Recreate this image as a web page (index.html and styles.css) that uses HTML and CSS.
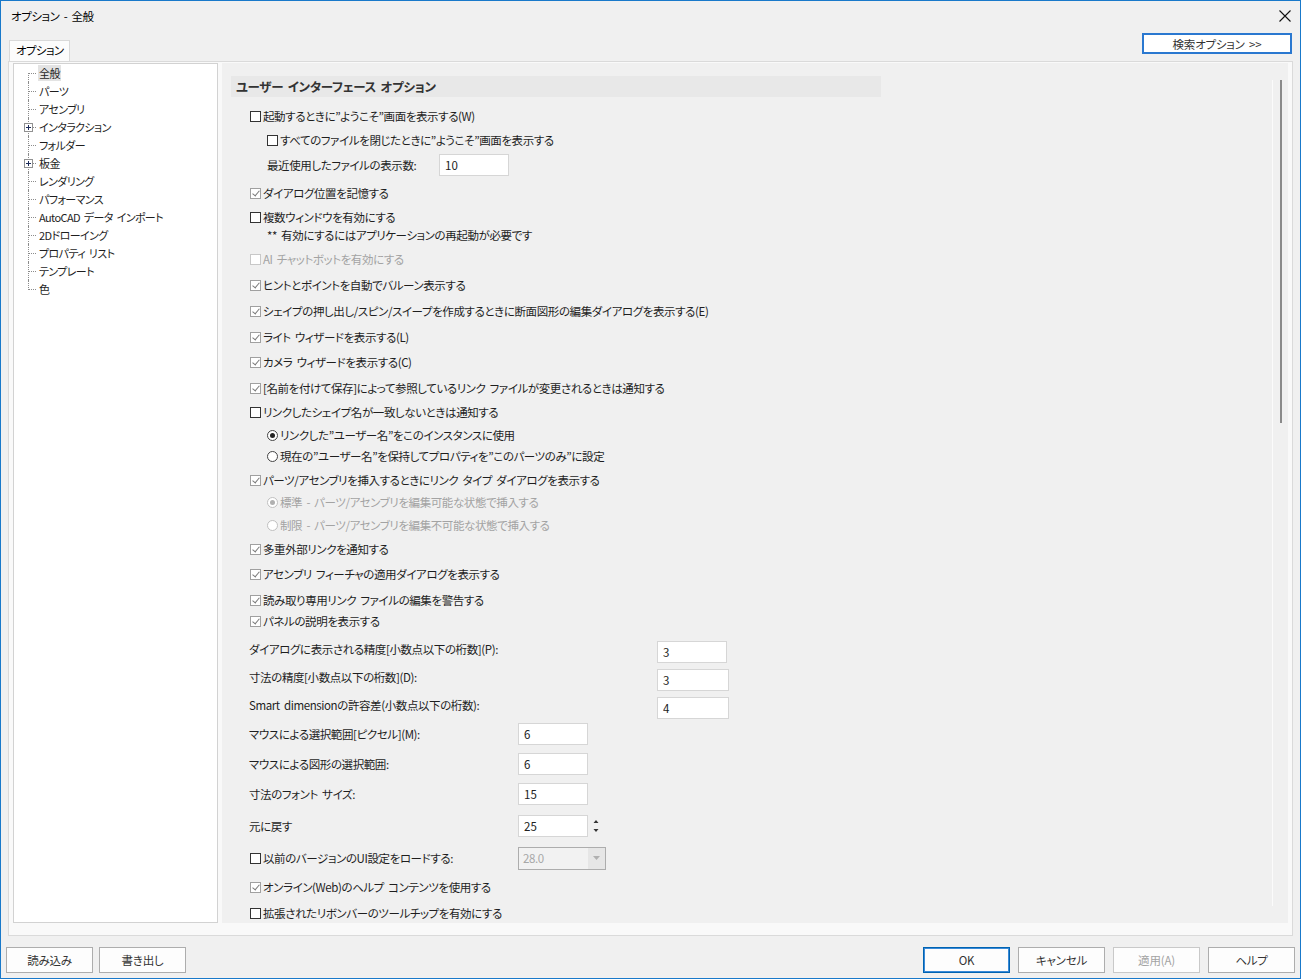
FILE: index.html
```html
<!DOCTYPE html>
<html>
<head>
    <title>オプション - 全般</title>
    <meta charset="utf-8">
    <link rel="stylesheet" href="styles.css">
</head>
<body>
<div class="window">
    <div class="titlebar">
        <span class="title">オプション - 全般</span>
        <svg class="close" width="12" height="12" viewBox="0 0 12 12"><path d="M0.5 0.5 L11.5 11.5 M11.5 0.5 L0.5 11.5" stroke="#111" stroke-width="1.1" fill="none"/></svg>
    </div>

    <div class="tabbar">
        <div class="tab">オプション</div>
        <button class="search-btn">検索オプション &gt;&gt;</button>
    </div>

    <div class="panel">
        <ul class="tree">
            <li><span class="node selected">全般</span></li>
            <li><span class="node">パーツ</span></li>
            <li><span class="node">アセンブリ</span></li>
            <li><span class="expander"></span><span class="node">インタラクション</span></li>
            <li><span class="node">フォルダー</span></li>
            <li><span class="expander"></span><span class="node">板金</span></li>
            <li><span class="node">レンダリング</span></li>
            <li><span class="node">パフォーマンス</span></li>
            <li><span class="node">AutoCAD データ インポート</span></li>
            <li><span class="node">2Dドローイング</span></li>
            <li><span class="node">プロパティ リスト</span></li>
            <li><span class="node">テンプレート</span></li>
            <li><span class="node">色</span></li>
        </ul>

        <div class="content">
            <div class="section-title">ユーザー インターフェース オプション</div>
            <div class="opts">
                <div class="row mt9"><span class="check"></span>起動するときに”ようこそ”画面を表示する(W)</div>
                <div class="row in1"><span class="check"></span>すべてのファイルを閉じたときに”ようこそ”画面を表示する</div>
                <div class="row in1 mt5"><span class="lab lab-recent">最近使用したファイルの表示数:</span><input class="num" value="10"></div>
                <div class="row mt8"><span class="check on"></span>ダイアログ位置を記憶する</div>
                <div class="row"><span class="check"></span>複数ウィンドウを有効にする</div>
                <div class="row note in1 mt1">** 有効にするにはアプリケーションの再起動が必要です</div>
                <div class="row disabled mt7"><span class="check"></span>AI チャットボットを有効にする</div>
                <div class="row mt6"><span class="check on"></span>ヒントとポイントを自動でバルーン表示する</div>
                <div class="row mt6"><span class="check on"></span>シェイプの押し出し/スピン/スイープを作成するときに断面図形の編集ダイアログを表示する(E)</div>
                <div class="row mt6"><span class="check on"></span>ライト ウィザードを表示する(L)</div>
                <div class="row mt5"><span class="check on"></span>カメラ ウィザードを表示する(C)</div>
                <div class="row mt6"><span class="check on"></span>[名前を付けて保存]によって参照しているリンク ファイルが変更されるときは通知する</div>
                <div class="row"><span class="check"></span>リンクしたシェイプ名が一致しないときは通知する</div>
                <div class="row in1 mt3"><span class="radio on"></span>リンクした”ユーザー名”をこのインスタンスに使用</div>
                <div class="row in1 mt1"><span class="radio"></span>現在の”ユーザー名”を保持してプロパティを”このパーツのみ”に設定</div>
                <div class="row"><span class="check on"></span>パーツ/アセンブリを挿入するときにリンク タイプ ダイアログを表示する</div>
                <div class="row in1 disabled mt2"><span class="radio on"></span>標準 - パーツ/アセンブリを編集可能な状態で挿入する</div>
                <div class="row in1 disabled mt3"><span class="radio"></span>制限 - パーツ/アセンブリを編集不可能な状態で挿入する</div>
                <div class="row"><span class="check on"></span>多重外部リンクを通知する</div>
                <div class="row mt5"><span class="check on"></span>アセンブリ フィーチャの適用ダイアログを表示する</div>
                <div class="row mt6"><span class="check on"></span>読み取り専用リンク ファイルの編集を警告する</div>
                <div class="row mt1"><span class="check on"></span>パネルの説明を表示する</div>

                <div class="row field mt11"><span class="lab lab-wide up">ダイアログに表示される精度[小数点以下の桁数](P):</span><input class="num" value="3"></div>
                <div class="row field mt8"><span class="lab lab-wide up">寸法の精度[小数点以下の桁数](D):</span><input class="num wide" value="3"></div>
                <div class="row field mt8"><span class="lab lab-wide up">Smart dimensionの許容差(小数点以下の桁数):</span><input class="num wide" value="4"></div>
                <div class="row field mt6"><span class="lab lab-mid">マウスによる選択範囲[ピクセル](M):</span><input class="num" value="6"></div>
                <div class="row field mt10"><span class="lab lab-mid">マウスによる図形の選択範囲:</span><input class="num" value="6"></div>
                <div class="row field mt10"><span class="lab lab-mid">寸法のフォント サイズ:</span><input class="num" value="15"></div>
                <div class="row field mt12"><span class="lab lab-mid">元に戻す</span><input class="num" value="25">
                    <svg class="spin" width="8" height="16" viewBox="0 0 8 16"><path d="M4 2 L6.5 5 L1.5 5 Z M4 14 L6.5 11 L1.5 11 Z" fill="#333"/></svg>
                </div>
                <div class="row mt12"><span class="check"></span><span class="lab lab-ui">以前のバージョンのUI設定をロードする:</span>
                    <div class="combo"><span class="combo-val">28.0</span><span class="combo-btn"><svg width="7" height="4" viewBox="0 0 7 4"><path d="M0 0 L7 0 L3.5 4 Z" fill="#b0b0b0"/></svg></span></div>
                </div>
                <div class="row mt9"><span class="check on"></span>オンライン(Web)のヘルプ コンテンツを使用する</div>
                <div class="row mt6"><span class="check"></span>拡張されたリボンバーのツールチップを有効にする</div>
            </div>
            <div class="scroll-track"></div>
            <div class="scroll-thumb"></div>
        </div>
    </div>

    <div class="footer">
        <div class="btn-group">
            <button class="btn">読み込み</button>
            <button class="btn">書き出し</button>
        </div>
        <div class="btn-group">
            <button class="btn default">OK</button>
            <button class="btn">キャンセル</button>
            <button class="btn" disabled>適用(A)</button>
            <button class="btn">ヘルプ</button>
        </div>
    </div>
</div>
</body>
</html>
```

FILE: styles.css
```css
* {
    box-sizing: border-box;
}

body {
    margin: 0;
    font-family: "Noto Sans CJK JP", "Noto Sans", sans-serif;
    font-size: 11.5px;
    letter-spacing: -0.4px;
    word-spacing: 2px;
    font-feature-settings: "palt";
    color: #1e1e1e;
    background-color: #f0f0f0;
}

.window {
    width: 1301px;
    height: 979px;
    border: 1px solid #1979ca;
    background-color: #f0f0f0;
    display: flex;
    flex-direction: column;
    padding: 0 7px;
}

.titlebar {
    height: 30px;
    margin: 0 -7px;
    padding: 0 9px 0 10px;
    display: flex;
    align-items: center;
    justify-content: space-between;
    color: #000;
}

/* tab strip */
.tabbar {
    height: 30px;
    display: flex;
    justify-content: space-between;
    align-items: flex-end;
}

.tab {
    margin-left: 1px;
    height: 21px;
    padding: 0 5px 0 6px;
    line-height: 19px;
    border: 1px solid #d9d9d9;
    border-bottom: none;
    background-color: #fcfcfc;
    color: #000;
    letter-spacing: -0.6px;
}

.search-btn {
    align-self: flex-start;
    margin: 2px 1px 0 0;
    width: 150px;
    height: 21px;
    border: 2px solid #2a78d0;
    background-color: #fff;
    font-family: inherit;
    font-size: 11.5px;
    letter-spacing: -0.2px;
    word-spacing: 2px;
    font-feature-settings: "palt";
    color: #333;
    padding: 0;
}

.panel {
    height: 875px;
    border: 1px solid #dadada;
    background-color: #f9f9f9;
    padding: 1px 4px 13px 4px;
    display: flex;
    gap: 4px;
}

/* left tree */
.tree {
    width: 205px;
    height: 860px;
    margin: 0;
    padding: 0;
    list-style: none;
    border: 1px solid #d2d2d2;
    background-color: #fff;
    font-size: 11px;
    letter-spacing: -0.6px;
}

.tree li {
    position: relative;
    height: 18px;
    line-height: 18px;
    padding-left: 24px;
}

.tree li::before {
    content: "";
    position: absolute;
    left: 14px;
    top: 9px;
    width: 8px;
    border-top: 1px dotted #8c8c8c;
}

.tree li::after {
    content: "";
    position: absolute;
    left: 14px;
    top: 0;
    height: 18px;
    border-left: 1px dotted #8c8c8c;
}

.tree li:first-child::after {
    top: 9px;
    height: 9px;
}

.tree li:last-child::after {
    height: 10px;
}

.node {
    display: inline-block;
    padding: 0 1px;
    height: 16px;
    line-height: 16px;
    vertical-align: top;
    margin-top: 1px;
}

.node.selected {
    background-color: #e3e3e3;
}

.expander {
    position: absolute;
    left: 10px;
    top: 5px;
    width: 9px;
    height: 9px;
    border: 1px solid #919191;
    background-color: #fff;
    z-index: 1;
}

.expander::before {
    content: "";
    position: absolute;
    left: 1px;
    top: 3px;
    width: 5px;
    height: 1px;
    background-color: #1c2b5a;
}

.expander::after {
    content: "";
    position: absolute;
    left: 3px;
    top: 1px;
    width: 1px;
    height: 5px;
    background-color: #1c2b5a;
}

/* right page */
.content {
    flex: 1;
    height: 860px;
    position: relative;
    background-color: #f0f0f0;
    padding: 13px 0 0 9px;
}

.section-title {
    width: 650px;
    height: 21px;
    line-height: 21px;
    padding-left: 5px;
    background-color: #e8e8e8;
    font-weight: bold;
    font-size: 12.5px;
    letter-spacing: -0.3px;
    color: #333;
}

.opts {
    padding-left: 19px;
}

.row {
    display: flex;
    align-items: center;
    height: 20px;
    margin-top: 4px;
    white-space: nowrap;
}

.row.note {
    height: 14px;
}

.in1 {
    padding-left: 17px;
}

.disabled {
    color: #a3a3a3;
}

.mt1 { margin-top: 1px; }
.mt2 { margin-top: 2px; }
.mt3 { margin-top: 3px; }
.mt5 { margin-top: 5px; }
.mt6 { margin-top: 6px; }
.mt7 { margin-top: 7px; }
.mt8 { margin-top: 8px; }
.mt9 { margin-top: 9px; }
.mt10 { margin-top: 10px; }
.mt11 { margin-top: 11px; }
.mt12 { margin-top: 12px; }

.check {
    position: relative;
    width: 11px;
    height: 11px;
    margin-right: 2px;
    border: 1px solid #333;
    background-color: #fff;
    flex-shrink: 0;
}

.check.on {
    border-color: #a0a0a0;
}

.check.on::after {
    content: "";
    position: absolute;
    left: 2.5px;
    top: 0px;
    width: 3px;
    height: 6px;
    border-right: 1.5px solid #7a7a7a;
    border-bottom: 1.5px solid #7a7a7a;
    transform: rotate(40deg);
}

.disabled .check {
    border-color: #c8c8c8;
}

.radio {
    position: relative;
    width: 11px;
    height: 11px;
    margin-right: 2px;
    border: 1px solid #444;
    border-radius: 50%;
    background-color: #fff;
    flex-shrink: 0;
}

.radio.on::after {
    content: "";
    position: absolute;
    left: 2px;
    top: 2px;
    width: 5px;
    height: 5px;
    border-radius: 50%;
    background-color: #222;
}

.disabled .radio {
    border-color: #c0c0c0;
}

.disabled .radio.on::after {
    background-color: #b0b0b0;
}

.lab {
    display: inline-block;
}

.lab.up {
    margin-bottom: 7px;
}

.lab-recent { width: 172px; }
.lab-wide { width: 408px; margin-left: -1px; }
.lab-mid { width: 269px; margin-left: -1px; }
.lab-ui { width: 255px; }

.num {
    width: 70px;
    height: 22px;
    border: 1px solid #d6d6d6;
    background-color: #fff;
    padding: 0 0 0 5px;
    font-family: inherit;
    font-size: 11.5px;
    color: #222;
    outline: none;
}

.num.wide {
    width: 72px;
}

.spin {
    margin-left: 4px;
}

.combo {
    display: flex;
    width: 88px;
    height: 23px;
    border: 1px solid #adadad;
    background-color: #f2f2f2;
}

.combo-val {
    flex: 1;
    padding-left: 4px;
    line-height: 21px;
    color: #a8a8a8;
}

.combo-btn {
    width: 18px;
    display: flex;
    align-items: center;
    justify-content: center;
    background-color: #e6e6e6;
    border-left: 1px solid #f2f2f2;
}

.scroll-track {
    position: absolute;
    left: 1050px;
    top: 17px;
    width: 1px;
    height: 826px;
    background-color: #fbfbfb;
}

.scroll-thumb {
    position: absolute;
    left: 1058px;
    top: 17px;
    width: 2px;
    height: 343px;
    background-color: #8a8a8a;
}

/* bottom buttons */
.footer {
    display: flex;
    justify-content: space-between;
    margin: 11px -2px 0 -2px;
}

.btn-group {
    display: flex;
    gap: 6px;
}

.btn-group + .btn-group {
    gap: 8px;
}

.btn {
    width: 87px;
    height: 26px;
    border: 1px solid #adadad;
    background-color: #fdfdfd;
    font-family: inherit;
    font-size: 11.5px;
    letter-spacing: -0.2px;
    font-feature-settings: "palt";
    color: #333;
    padding: 0;
}

.btn.default {
    border: 1px solid #0063b1;
    box-shadow: inset 0 0 0 1px #3a8ad8;
}

.btn:disabled {
    color: #a3a3a3;
    border-color: #c9c9c9;
}
```
